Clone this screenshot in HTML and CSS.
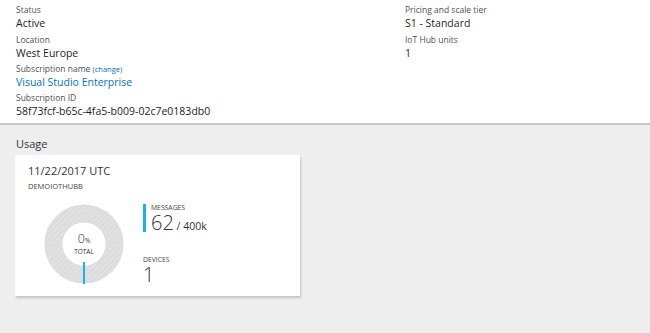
FILE: index.html
```html
<!DOCTYPE html>
<html>
<head>
<meta charset="utf-8">
<link rel="stylesheet" href="styles.css">
</head>
<body>
<div class="essentials">
  <div class="col">
    <div class="prop"><div class="label">Status</div><div class="value">Active</div></div>
    <div class="prop"><div class="label">Location</div><div class="value">West Europe</div></div>
    <div class="prop"><div class="label">Subscription name <a class="change">(change)</a></div><div class="value link">Visual Studio Enterprise</div></div>
    <div class="prop"><div class="label">Subscription ID</div><div class="value">58f73fcf-b65c-4fa5-b009-02c7e0183db0</div></div>
  </div>
  <div class="col right">
    <div class="prop"><div class="label">Pricing and scale tier</div><div class="value">S1 - Standard</div></div>
    <div class="prop"><div class="label">IoT Hub units</div><div class="value">1</div></div>
  </div>
</div>
<div class="usage">
  <div class="usage-title">Usage</div>
  <div class="card">
    <div class="date">11/22/2017 UTC</div>
    <div class="hub">DEMOIOTHUBB</div>
    <div class="card-body">
      <div class="donut">
        <svg width="80" height="80" viewBox="0 0 80 80">
          <defs>
            <pattern id="hatch" width="4" height="4" patternUnits="userSpaceOnUse" patternTransform="rotate(45)">
              <rect width="4" height="4" fill="#e0e0e0"/>
              <rect width="1" height="4" fill="#d9d9d9"/>
            </pattern>
          </defs>
          <circle cx="40" cy="40" r="30.5" fill="none" stroke="url(#hatch)" stroke-width="18"/>
          <rect x="39" y="58" width="2" height="22" fill="#16b4ea"/>
        </svg>
        <div class="donut-label">
          <div class="pct">0<span>%</span></div>
          <div class="total">TOTAL</div>
        </div>
      </div>
      <div class="stats">
        <div class="stat msg">
          <div class="stat-label">MESSAGES</div>
          <div class="stat-value">62<span class="of"> / 400k</span></div>
        </div>
        <div class="stat dev">
          <div class="stat-label">DEVICES</div>
          <div class="stat-value">1</div>
        </div>
      </div>
    </div>
  </div>
</div>
</body>
</html>
```
FILE: styles.css
```css
html, body {
  margin: 0;
  padding: 0;
  height: 100%;
}
body {
  font-family: "Open Sans", "Noto Sans", sans-serif;
  color: #1e1e1e;
  background: #eeeeee;
  display: flex;
  flex-direction: column;
}
.essentials {
  background: #ffffff;
  display: flex;
  padding: 5px 0 0 16px;
  height: 118px;
  border-bottom: 2px solid #c6c6c6;
}
.col {
  width: 389px;
}
.col.right {
  width: auto;
}
.prop {
  margin-bottom: 3px;
}
.prop:first-child {
  margin-bottom: 4px;
}
.label {
  font-size: 8.5px;
  line-height: 10px;
  color: #505050;
}
.change {
  color: #0072c6;
  font-size: 7.5px;
}
.value {
  font-size: 10.5px;
  line-height: 16px;
  color: #1e1e1e;
}
.value.link {
  color: #0072c6;
}
.usage {
  flex: 1;
  padding: 11px 0 0 15px;
}
.usage-title {
  font-size: 11px;
  line-height: 16px;
  color: #333;
  padding-left: 1px;
  margin-bottom: 3px;
}
.card {
  width: 285px;
  height: 141px;
  background: #fff;
  box-shadow: 1px 2px 2px rgba(0,0,0,0.18);
  box-sizing: border-box;
  padding: 8px 0 0 13px;
}
.date {
  font-size: 11px;
  line-height: 16px;
  color: #333;
}
.hub {
  font-size: 7.5px;
  line-height: 12px;
  color: #444;
  margin-top: 1px;
}
.card-body {
  display: flex;
  align-items: flex-start;
  margin-top: 12px;
}
.donut {
  position: relative;
  width: 80px;
  height: 80px;
  margin-left: 16px;
}
.donut svg {
  display: block;
}
.donut-label {
  position: absolute;
  left: 0;
  right: 0;
  top: 29px;
  text-align: center;
  color: #333;
}
.pct {
  font-size: 12.5px;
  line-height: 12px;
  font-weight: 300;
}
.pct span {
  font-size: 6.5px;
  font-weight: 400;
}
.total {
  font-size: 6.5px;
  line-height: 9px;
}
.stats {
  margin-left: 19px;
}
.stat.msg {
  border-left: 3px solid #16b4ea;
  padding-left: 5px;
  height: 28px;
}
.stat.dev {
  margin-top: 24px;
}
.stat-label {
  font-size: 6.8px;
  line-height: 8px;
  color: #444;
}
.stat-value {
  font-size: 20px;
  line-height: 21px;
  font-weight: 300;
  color: #333;
  white-space: nowrap;
}
.of {
  font-size: 10.5px;
  font-weight: 400;
}
```
